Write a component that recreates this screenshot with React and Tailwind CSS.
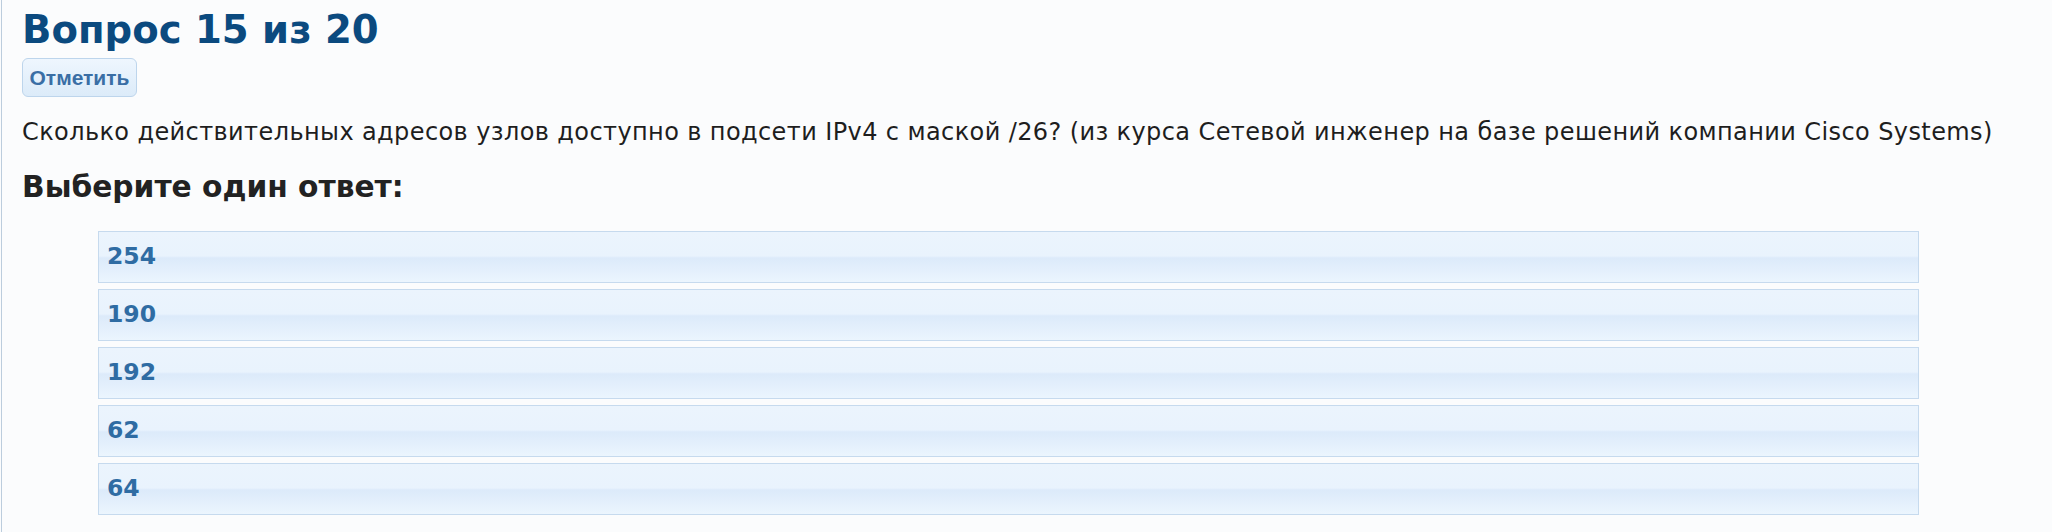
export default function App() {
  const answers = ["254", "190", "192", "62", "64"];
  return (
    <div className="h-[532px] w-[2052px] overflow-hidden bg-[#fbfcfd]">
      <div className="ml-px h-full border-l border-[#bccddd] pl-[20px] pt-[6px] font-['DejaVu_Sans',sans-serif]">
        <h2 className="text-[38.6px] leading-[48px] font-semibold text-[#0b4a7f]">Вопрос 15 из 20</h2>
        <button className="mt-[4px] flex h-[39px] w-[115px] items-center justify-center rounded-[6px] border border-[#bdd5ec] bg-[linear-gradient(to_bottom,#eef6fe,#dcebf9)] font-['Liberation_Sans',sans-serif] text-[21px] font-bold text-[#3a6ea5]">
          Отметить
        </button>
        <p className="mt-[20px] text-[24px] leading-[30px] tracking-[0.4px] text-[#1e1e1e]">
          Сколько действительных адресов узлов доступно в подсети IPv4 с маской /26? (из курса Сетевой инженер на базе решений компании Cisco Systems)
        </p>
        <h3 className="mt-[22px] text-[29.7px] leading-[36px] font-bold text-[#222222]">Выберите один ответ:</h3>
        <div className="ml-[76px] mt-[26px] flex w-[1821px] flex-col gap-[6px]">
          {answers.map((a) => (
            <div
              key={a}
              className="flex h-[52px] items-center border border-[#c6daee] bg-[linear-gradient(to_bottom,#ebf4fd_0%,#e9f3fd_48%,#dceafa_52%,#ebf5fe_100%)] px-[8px] text-[23.5px] font-bold text-[#2f6ca3]"
            >
              {a}
            </div>
          ))}
        </div>
      </div>
    </div>
  );
}
